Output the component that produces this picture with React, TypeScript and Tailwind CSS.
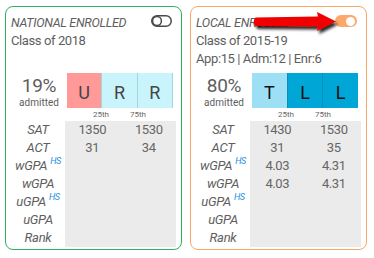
import React from 'react';

type Row = { label: string; hs?: boolean; lo?: string; hi?: string };

const leftRows: Row[] = [
  { label: 'SAT', lo: '1350', hi: '1530' },
  { label: 'ACT', lo: '31', hi: '34' },
  { label: 'wGPA', hs: true },
  { label: 'wGPA' },
  { label: 'uGPA', hs: true },
  { label: 'uGPA' },
  { label: 'Rank' },
];

const rightRows: Row[] = [
  { label: 'SAT', lo: '1430', hi: '1530' },
  { label: 'ACT', lo: '31', hi: '35' },
  { label: 'wGPA', hs: true, lo: '4.03', hi: '4.31' },
  { label: 'wGPA', lo: '4.03', hi: '4.31' },
  { label: 'uGPA', hs: true },
  { label: 'uGPA' },
  { label: 'Rank' },
];

const ToggleOff = () => (
  <svg width="21" height="12" viewBox="0 0 21 12" fill="none" className="mt-[2px]">
    <rect x="0.75" y="0.75" width="19.5" height="10.5" rx="5.25" stroke="#4a4a4a" strokeWidth="1.5" />
    <circle cx="6" cy="6" r="4.4" stroke="#4a4a4a" strokeWidth="1.5" />
  </svg>
);

const ToggleOn = () => (
  <div className="mt-[2px] w-[22px] h-[12px] rounded-full bg-[#fda86a] flex items-center justify-end pr-[2px]">
    <div className="w-[9px] h-[9px] rounded-full bg-white" />
  </div>
);

const Box = ({ text, cls }: { text: string; cls: string }) => (
  <div className={`flex-1 flex items-center justify-center text-[18px] pt-[3px] ${cls}`}>{text}</div>
);

const Card = ({
  title,
  border,
  toggle,
  classOf,
  info,
  pct,
  boxes,
  rows,
}: {
  title: string;
  border: string;
  toggle: React.ReactNode;
  classOf: string;
  info?: string;
  pct: string;
  boxes: React.ReactNode;
  rows: Row[];
}) => (
  <div className={`w-[177px] h-[244px] border rounded-lg px-[5px] text-[#5e5e5e] ${border}`}>
    <div className="flex items-start justify-between pt-[6px] pr-[4px]">
      <span className="mt-[2px] italic text-[12.5px] leading-[16px] tracking-[-0.3px] whitespace-nowrap">{title}</span>
      {toggle}
    </div>
    <div className="text-[13px] leading-[18px] tracking-[-0.4px] mt-[1px]">{classOf}</div>
    <div className="text-[13px] leading-[18px] tracking-[-0.4px] h-[18px]">{info}</div>
    <div className="flex mt-[5px] h-[35px]">
      <div className="w-[56px] flex flex-col items-center pt-[2px]">
        <span className="text-[19px] leading-[22px] tracking-[-0.3px]">{pct}</span>
        <span className="text-[10px] leading-[12px]">admitted</span>
      </div>
      <div className="w-[106px] flex">{boxes}</div>
    </div>
    <div className="flex h-[13px] items-center pl-[82px] text-[8px] text-[#666]">
      <span className="w-[37px]">25th</span>
      <span>75th</span>
    </div>
    <div className="flex">
      <div className="w-[54px] flex flex-col">
        {rows.map((r, i) => (
          <div key={i} className="h-[18px] flex items-center justify-center italic text-[13px] tracking-[-0.3px]">
            <span>{r.label}</span>
            {r.hs && <span className="text-[9px] text-[#1a8fe0] ml-[3px] -mt-[9px]">HS</span>}
          </div>
        ))}
      </div>
      <div className="flex-1 bg-[#ebebeb] flex flex-col text-[#666]">
        {rows.map((r, i) => (
          <div key={i} className="h-[18px] flex items-center text-[13px] tracking-[-0.4px]">
            <span className="flex-1 text-center">{r.lo}</span>
            <span className="flex-1 text-center pl-[2px]">{r.hi}</span>
          </div>
        ))}
      </div>
    </div>
  </div>
);

const Arrow = () => (
  <svg width="96" height="36" viewBox="0 0 96 36" className="absolute left-[250px] top-[8px]">
    <defs>
      <filter id="sh" x="-20%" y="-40%" width="140%" height="200%">
        <feGaussianBlur in="SourceAlpha" stdDeviation="1.6" />
        <feOffset dx="2" dy="3" result="b" />
        <feComponentTransfer>
          <feFuncA type="linear" slope="0.85" />
        </feComponentTransfer>
        <feMerge>
          <feMergeNode />
          <feMergeNode in="SourceGraphic" />
        </feMerge>
      </filter>
    </defs>
    <path
      d="M5.5 9.5 Q2 14 5.5 18 L68 18.5 L67 23 L86 13.5 L67 4 L68 8.5 Z"
      fill="#f00000"
      filter="url(#sh)"
    />
  </svg>
);

export default function App() {
  return (
    <div className="relative w-[374px] h-[258px] bg-white" style={{ fontFamily: 'Roboto, "Noto Sans", sans-serif' }}>
      <div className="flex gap-[8px] pl-[5px] pt-[6px]">
        <Card
          title="NATIONAL ENROLLED"
          border="border-[#2bb35e]"
          toggle={<ToggleOff />}
          classOf="Class of 2018"
          pct="19%"
          boxes={
            <>
              <Box text="U" cls="bg-[#ff9a98] text-[#444]" />
              <Box text="R" cls="bg-[#c9f4fc] text-[#444] border-l border-[#9fd6df]" />
              <Box text="R" cls="bg-[#c9f4fc] text-[#444] border-l border-r border-[#9fd6df]" />
            </>
          }
          rows={leftRows}
        />
        <Card
          title="LOCAL ENROLLED"
          border="border-[#f8a765]"
          toggle={<ToggleOn />}
          classOf="Class of 2015-19"
          info="App:15 | Adm:12 | Enr:6"
          pct="80%"
          boxes={
            <>
              <Box text="T" cls="bg-[#9de0f6] text-[#111]" />
              <Box text="L" cls="bg-[#00a6d6] text-[#111] border-l border-[#0a8fb8]" />
              <Box text="L" cls="bg-[#00a6d6] text-[#111] border-l border-[#0a8fb8]" />
            </>
          }
          rows={rightRows}
        />
      </div>
      <Arrow />
    </div>
  );
}
